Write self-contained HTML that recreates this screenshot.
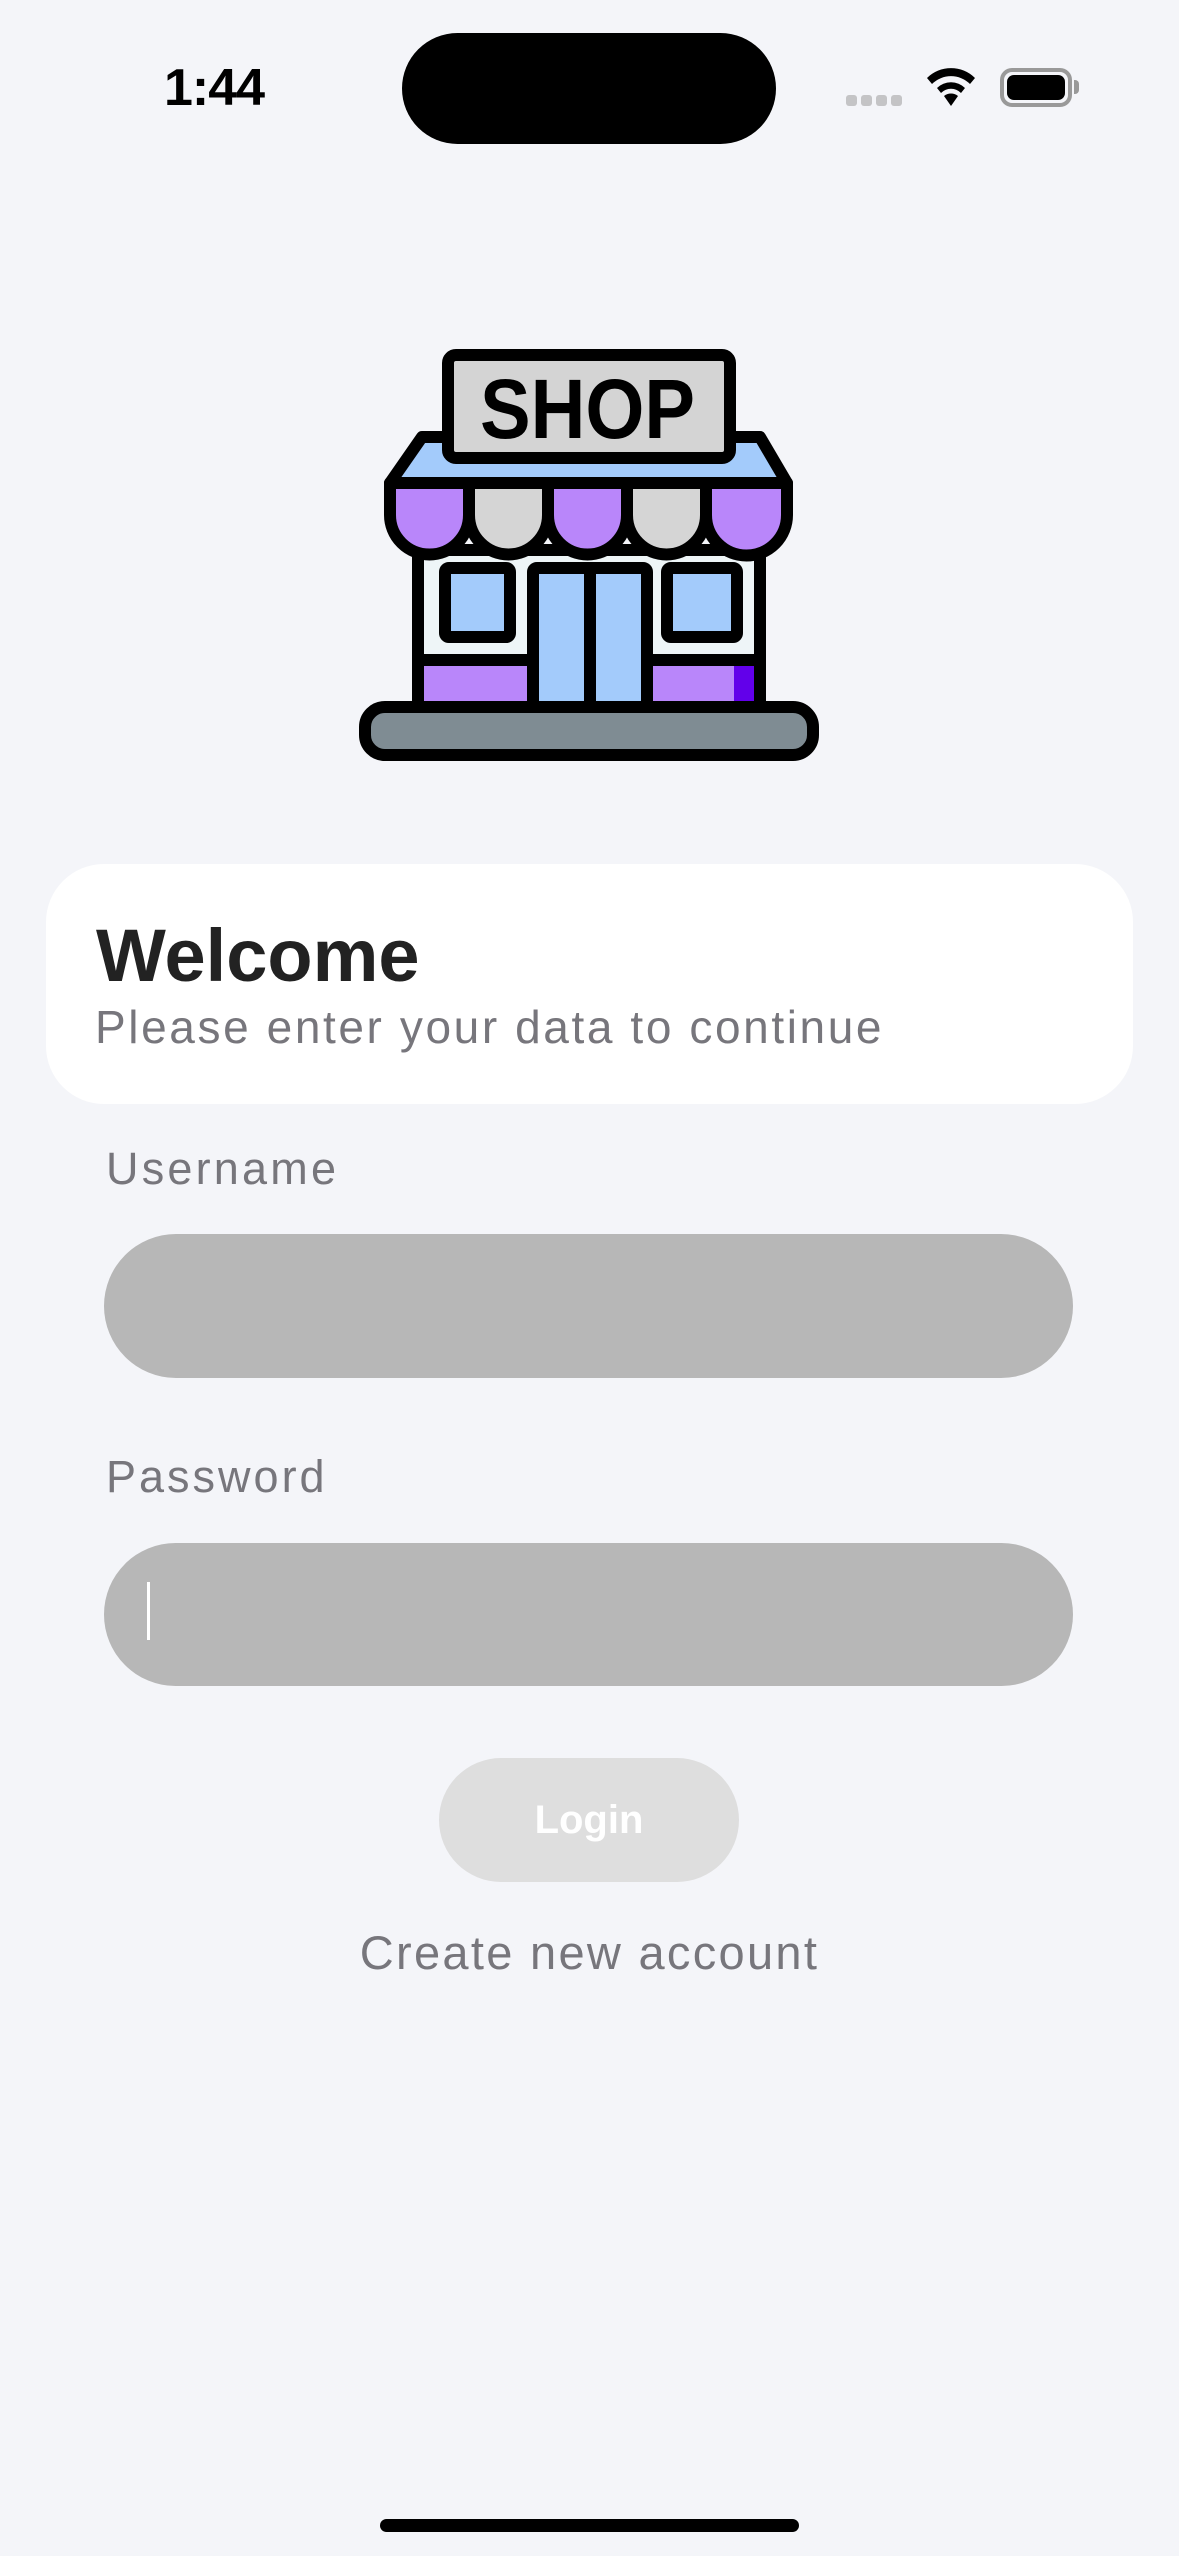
<!DOCTYPE html>
<html><head><meta charset="utf-8"><style>
*{margin:0;padding:0;box-sizing:border-box}
body{width:1179px;height:2556px;background:#f4f5f9;position:relative;overflow:hidden;font-family:"Liberation Sans",sans-serif}
.a{position:absolute}
</style></head><body>
<div class="a" style="left:164px;top:58px;font-size:52px;font-weight:bold;letter-spacing:-1px;color:#000">1:44</div>
<div class="a" style="left:402px;top:33px;width:374px;height:111px;border-radius:56px;background:#000"></div>
<div class="a" style="left:846px;top:95px;width:56px;height:11px;display:flex;gap:4px">
<div style="flex:1;background:#c4c4c6;border-radius:3px"></div><div style="flex:1;background:#c4c4c6;border-radius:3px"></div><div style="flex:1;background:#c4c4c6;border-radius:3px"></div><div style="flex:1;background:#c4c4c6;border-radius:3px"></div></div>
<svg class="a" style="left:924px;top:66px" width="54" height="42" viewBox="0 0 54 42"><path d="M27 40 L20 30 A11 11 0 0 1 34 30 Z" fill="#000"/><path d="M13 22 A20 20 0 0 1 41 22 L37 27 A14 14 0 0 0 17 27 Z" fill="#000"/><path d="M3 12 A34 34 0 0 1 51 12 L46 18 A27 27 0 0 0 8 18 Z" fill="#000"/></svg>
<div class="a" style="left:1000px;top:68px;width:72px;height:39px;border:4px solid #999;border-radius:12px;padding:3px"><div style="width:100%;height:100%;background:#000;border-radius:7px"></div></div>
<div class="a" style="left:1074px;top:80px;width:5px;height:14px;background:#999;border-radius:0 4px 4px 0"></div>

<svg class="a" style="left:350px;top:340px" width="480" height="430" viewBox="0 0 480 430">
<g stroke="#000" stroke-width="12" stroke-linejoin="round" stroke-linecap="round">
<path d="M72 97 L410 97 L437 143 L40 143 Z" fill="#a3cbfb"/>
<path d="M68 210 L68 370 L410 370 L410 210 Z" fill="#eef5f7"/>
<rect x="72" y="320" width="111" height="50" fill="#b986fa" stroke="none"/>
<rect x="297" y="320" width="108" height="50" fill="#b986fa" stroke="none"/>
<rect x="384" y="320" width="21" height="50" fill="#6200ea" stroke="none"/>
<path d="M72 320 L183 320 M297 320 L405 320" fill="none"/>
<path d="M68 210 L68 370 L410 370 L410 210" fill="none"/>
<path d="M40 143 L119 143 L119 175 A39.5 39.5 0 0 1 40 175 Z" fill="#b986fa"/>
<path d="M119 143 L198 143 L198 175 A39.5 39.5 0 0 1 119 175 Z" fill="#d5d5d5"/>
<path d="M198 143 L277 143 L277 175 A39.5 39.5 0 0 1 198 175 Z" fill="#b986fa"/>
<path d="M277 143 L356 143 L356 175 A39.5 39.5 0 0 1 277 175 Z" fill="#d5d5d5"/>
<path d="M356 143 L437 143 L437 175 A40.5 40.5 0 0 1 356 175 Z" fill="#b986fa"/>
<rect x="98" y="15" width="282" height="103" rx="8" fill="#d4d4d4"/>
<rect x="95" y="228" width="65" height="69" rx="4" fill="#a3cbfb"/>
<rect x="317" y="228" width="70" height="69" rx="4" fill="#a3cbfb"/>
<rect x="183" y="228" width="114" height="142" rx="4" fill="#a3cbfb"/>
<path d="M240 228 L240 370" fill="none"/>
<rect x="15" y="367" width="448" height="48" rx="20" fill="#7f8c93"/>
</g>
<text x="130" y="98" font-family="Liberation Sans" font-weight="bold" font-size="84" textLength="215" lengthAdjust="spacingAndGlyphs" fill="#000">SHOP</text>
</svg>

<div class="a" style="left:46px;top:864px;width:1087px;height:240px;background:#fff;border-radius:58px"></div>
<div class="a" style="left:96px;top:913px;font-size:74px;font-weight:bold;color:#222">Welcome</div>
<div class="a" style="left:95px;top:1000px;font-size:46px;color:#77767c;letter-spacing:2.6px">Please enter your data to continue</div>
<div class="a" style="left:106px;top:1143px;font-size:45px;color:#77767c;letter-spacing:3.2px">Username</div>
<div class="a" style="left:104px;top:1234px;width:969px;height:144px;background:#b7b7b7;border-radius:72px"></div>
<div class="a" style="left:106px;top:1451px;font-size:45px;color:#77767c;letter-spacing:3px">Password</div>
<div class="a" style="left:104px;top:1543px;width:969px;height:143px;background:#b7b7b7;border-radius:72px"></div>
<div class="a" style="left:147px;top:1582px;width:3px;height:58px;background:#fff"></div>
<div class="a" style="left:439px;top:1758px;width:300px;height:124px;background:#dedede;border-radius:62px;color:#fff;font-weight:bold;font-size:40px;line-height:124px;text-align:center">Login</div>
<div class="a" style="left:0;top:1925px;width:1179px;text-align:center;font-size:47px;color:#77767c;letter-spacing:2.3px">Create new account</div>
<div class="a" style="left:380px;top:2519px;width:419px;height:13px;background:#000;border-radius:7px"></div>
</body></html>
